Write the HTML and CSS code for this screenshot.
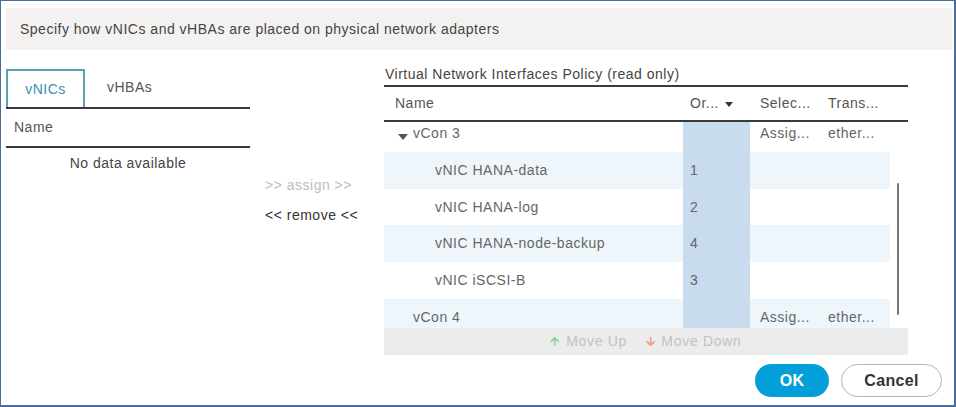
FILE: index.html
```html
<!DOCTYPE html>
<html>
<head>
<meta charset="utf-8">
<link rel="stylesheet" href="styles.css">
</head>
<body>
<div class="frame">
  <div class="intro">Specify how vNICs and vHBAs are placed on physical network adapters</div>
  <div class="main">
    <div class="left">
      <div class="tabs">
        <div class="tab active">vNICs</div>
        <div class="tab">vHBAs</div>
      </div>
      <div class="lhead">Name</div>
      <div class="nodata">No data available</div>
    </div>
    <div class="mid">
      <div class="act disabled">&gt;&gt; assign &gt;&gt;</div>
      <div class="act">&lt;&lt; remove &lt;&lt;</div>
    </div>
    <div class="right">
      <div class="title">Virtual Network Interfaces Policy (read only)</div>
      <div class="thead">
        <div class="c-name">Name</div>
        <div class="c-ord">Or... <span class="caret"></span></div>
        <div class="c-sel">Selec...</div>
        <div class="c-tr">Trans...</div>
      </div>
      <div class="tbody">
        <div class="rows">
          <div class="row">
            <div class="c-name grp"><span class="tri"></span>vCon 3</div>
            <div class="c-ord"></div>
            <div class="c-sel">Assig...</div>
            <div class="c-tr">ether...</div>
          </div>
          <div class="row alt">
            <div class="c-name sub">vNIC HANA-data</div>
            <div class="c-ord">1</div>
            <div class="c-sel"></div>
            <div class="c-tr"></div>
          </div>
          <div class="row">
            <div class="c-name sub">vNIC HANA-log</div>
            <div class="c-ord">2</div>
            <div class="c-sel"></div>
            <div class="c-tr"></div>
          </div>
          <div class="row alt">
            <div class="c-name sub">vNIC HANA-node-backup</div>
            <div class="c-ord">4</div>
            <div class="c-sel"></div>
            <div class="c-tr"></div>
          </div>
          <div class="row">
            <div class="c-name sub">vNIC iSCSI-B</div>
            <div class="c-ord">3</div>
            <div class="c-sel"></div>
            <div class="c-tr"></div>
          </div>
          <div class="row alt">
            <div class="c-name grp">vCon 4</div>
            <div class="c-ord"></div>
            <div class="c-sel">Assig...</div>
            <div class="c-tr">ether...</div>
          </div>
        </div>
        <div class="track"><div class="thumb"></div></div>
      </div>
      <div class="movebar">
        <span class="up">&#129137;</span><span class="mv">Move Up</span>
        <span class="down">&#129139;</span><span class="mv">Move Down</span>
      </div>
    </div>
  </div>
  <div class="footer">
    <button class="btn ok">OK</button>
    <button class="btn cancel">Cancel</button>
  </div>
</div>
</body>
</html>
```

FILE: styles.css
```css
* { box-sizing: border-box; }
html, body { margin: 0; padding: 0; background: #fff; }
body {
  font-family: "Liberation Sans", Arial, sans-serif;
  font-size: 14px; letter-spacing: 0.5px; color: #555;
}

.frame {
  width: 956px; height: 407px;
  border: 1px solid #4c6e9e;
  border-right-width: 2px; border-bottom-width: 2px;
  padding-top: 7px;
}

.intro {
  margin: 0 1px 0 5px;
  height: 42px;
  background: #f3f2f1;
  padding-left: 14px;
  line-height: 42px;
  color: #444;
}

.main { display: flex; margin-top: 17px; margin-left: 5px; }

.left { width: 244px; }
.tabs {
  display: flex; height: 40px;
  border-bottom: 2px solid #3a3a3a;
  margin-top: 2px;
}
.tab {
  height: 38px; line-height: 36px;
  color: #555;
  padding-left: 22px;
}
.tab.active {
  width: 79px; padding-left: 0; text-align: center;
  border: 2px solid #5aa1b8; border-bottom: none;
  color: #3c8fb2;
}
.lhead {
  height: 39px; line-height: 36px;
  padding-left: 8px; color: #555;
  border-bottom: 2px solid #3a3a3a;
}
.nodata { text-align: center; line-height: 30px; color: #444; }

.mid { width: 134px; padding-left: 15px; padding-top: 110px; }
.act { line-height: 16px; color: #333; margin-bottom: 14px; }
.act.disabled { color: #bdbdbd; }

.right { width: 524px; }
.title {
  height: 20px; line-height: 14px;
  padding-left: 1px; color: #444;
  border-bottom: 2px solid #3a3a3a;
}
.thead {
  display: flex; height: 35px; line-height: 33px;
  border-bottom: 2px solid #3a3a3a;
  color: #555;
}
.c-name { width: 299px; padding-left: 11px; white-space: nowrap; }
.c-ord { width: 67px; padding-left: 7px; white-space: nowrap; }
.c-sel { width: 68px; padding-left: 10px; white-space: nowrap; }
.c-tr { width: 72px; padding-left: 10px; white-space: nowrap; }
.caret {
  display: inline-block; width: 0; height: 0;
  border-left: 4px solid transparent; border-right: 4px solid transparent;
  border-top: 5px solid #333;
  vertical-align: middle; margin-left: 2px;
}

.tbody { display: flex; height: 206px; overflow: hidden; }
.rows { width: 506px; margin-top: -7px; }
.row { display: flex; height: 36.8px; line-height: 36px; color: #666; }
.row.alt { background: #eff6fb; }
.row .c-ord { background: #c9dcee; }
.grp { padding-left: 29px; }
.sub { padding-left: 51px; }
.tri {
  display: inline-block; width: 0; height: 0;
  border-left: 5px solid transparent; border-right: 5px solid transparent;
  border-top: 6px solid #555;
  margin: 0 5px 0 -15px; vertical-align: -2px;
}
.track { width: 18px; }
.thumb { width: 2px; height: 132px; background: #777; margin-left: 7px; margin-top: 61px; border-radius: 1px; }

.movebar {
  height: 27px; line-height: 27px;
  background: #ececec; text-align: center;
  color: #c2c2c2; letter-spacing: 0.7px;
}
.up { color: #8ed29e; font-size: 13px; margin-right: 6px; }
.down { color: #f0a08f; font-size: 13px; margin: 0 6px 0 14px; }

.footer { display: flex; justify-content: flex-end; gap: 12px; margin-top: 9px; padding-right: 12px; }
.btn {
  height: 33px; border-radius: 17px;
  font-family: "Liberation Sans", Arial, sans-serif;
  font-weight: bold; font-size: 16px; letter-spacing: 0.3px;
}
.ok { width: 74px; background: #049fd9; color: #fff; border: none; }
.cancel { width: 101px; background: #fff; color: #333; border: 1px solid #b5b5b5; }
```
